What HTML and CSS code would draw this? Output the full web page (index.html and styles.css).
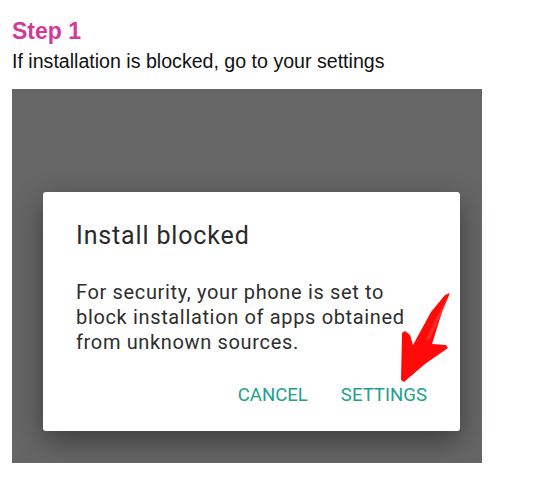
FILE: index.html
```html
<!DOCTYPE html>
<html>
<head>
<meta charset="utf-8">
<link rel="stylesheet" href="styles.css">
</head>
<body>
<div class="page">
  <h1 class="step">Step 1</h1>
  <p class="lead">If installation is blocked, go to your settings</p>
  <div class="shot">
    <div class="dialog">
      <div class="title">Install blocked</div>
      <div class="msg">For security, your phone is set to<br>block installation of apps obtained<br>from unknown sources.</div>
      <div class="actions">
        <span class="btn">CANCEL</span>
        <span class="btn">SETTINGS</span>
      </div>
      <svg class="arrow" width="60" height="100" viewBox="0 0 60 100">
        <polygon fill="#ff0a0a" points="55,3 47,22 37,54 51,55 53,58 30,74 9,92 6,90 7,43 10,41 15,45 18,55 36,22 50,5"/>
        <polygon fill="#ff4040" opacity="0.6" points="53,7 41,28 31,50 35,49 45,27"/>
      </svg>
    </div>
  </div>
</div>
</body>
</html>
```
FILE: styles.css
```css
html, body {
  margin: 0;
  padding: 0;
  background: #ffffff;
}
.page {
  padding: 18px 12px 0 12px;
  font-family: "Liberation Sans", Arial, sans-serif;
}
.step {
  margin: 0;
  font-size: 23px;
  line-height: 27px;
  font-weight: bold;
  color: #cf3a9b;
}
.lead {
  margin: 5px 0 0 0;
  font-size: 19.6px;
  line-height: 22px;
  color: #111111;
}
.shot {
  margin-top: 17px;
  width: 470px;
  box-sizing: border-box;
  padding: 103px 22px 32px 31px;
  background: #666666;
}
.dialog {
  position: relative;
  width: 417px;
  box-sizing: border-box;
  padding: 29px 33px 26px 33px;
  background: #ffffff;
  border-radius: 3px;
  box-shadow: 0 10px 28px rgba(0, 0, 0, 0.4);
  font-family: Roboto, "Noto Sans", sans-serif;
}
.title {
  font-size: 25px;
  line-height: 30px;
  letter-spacing: 0.85px;
  color: #2a2a2a;
}
.msg {
  margin-top: 29px;
  font-size: 20px;
  line-height: 25px;
  letter-spacing: 0.65px;
  color: #2e2e2e;
}
.actions {
  margin-top: 30px;
  display: flex;
  justify-content: flex-end;
  gap: 33px;
}
.btn {
  font-size: 18.6px;
  line-height: 20px;
  color: #22a08d;
}
.arrow {
  position: absolute;
  left: 352px;
  top: 98px;
}
```
